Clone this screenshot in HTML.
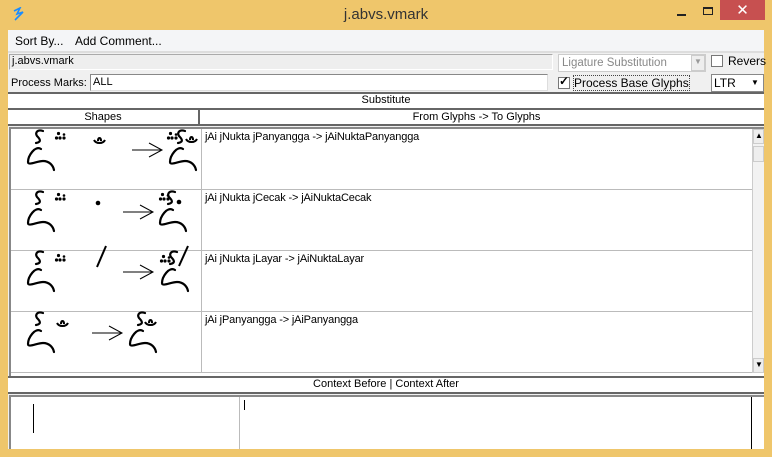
<!DOCTYPE html>
<html><head><style>
*{margin:0;padding:0;box-sizing:border-box}
body{width:772px;height:457px;background:#efc66b;font-family:"Liberation Sans",sans-serif;font-size:11px;position:relative;overflow:hidden;color:#000}
.a{position:absolute}
.t{white-space:nowrap}
.s{letter-spacing:-0.15px}
</style></head><body>
<svg class="a" style="left:12px;top:7px" width="14" height="16" viewBox="0 0 14 16"><path d="M2,4 L8,1 L5,7 L11,5 L3,13" fill="none" stroke="#1a8cff" stroke-width="1.6"/></svg>
<div class="a t" style="left:0;width:772px;top:6px;text-align:center;font-size:15px;color:#333">j.abvs.vmark</div>
<div class="a" style="left:677px;top:14px;width:9px;height:2px;background:#222"></div>
<div class="a" style="left:703px;top:7px;width:10px;height:8px;border:1px solid #222;border-top-width:2px"></div>
<div class="a" style="left:720px;top:0;width:45px;height:20px;background:#c75050"></div>
<div class="a t" style="left:720px;top:1px;width:45px;text-align:center;color:#fff;font-size:15px">✕</div>
<div class="a" style="left:8px;top:30px;width:756px;height:419px;background:#f0f0f0"></div>
<div class="a" style="left:8px;top:30px;width:756px;height:21px;background:#f4f5f7"></div>
<div class="a t" style="left:15px;top:34px;font-size:12px">Sort By...</div>
<div class="a t" style="left:75px;top:34px;font-size:12px">Add Comment...</div>
<div class="a" style="left:8px;top:51px;width:756px;height:2px;background:#ddd"></div>
<div class="a" style="left:9px;top:54px;width:544px;height:16px;background:#eee;border:1px solid #aaa;border-right-color:#fff;border-bottom-color:#fff"></div>
<div class="a t" style="left:12px;top:55px">j.abvs.vmark</div>
<div class="a t" style="left:11px;top:77px">Process Marks:</div>
<div class="a" style="left:90px;top:74px;width:458px;height:17px;background:#fff;border:1px solid #888;border-right-color:#ddd;border-bottom-color:#ddd"></div>
<div class="a t" style="left:93px;top:76px">ALL</div>
<div class="a" style="left:558px;top:54px;width:148px;height:18px;background:#fff;border:1px solid #ccc"></div>
<div class="a t" style="left:562px;top:57px;color:#888;font-size:11.5px">Ligature Substitution</div>
<div class="a" style="left:691px;top:55px;width:14px;height:16px;background:#eee;border:1px solid #ccc"></div>
<div class="a t" style="left:694px;top:57px;color:#999;font-size:8px">▼</div>
<div class="a" style="left:711px;top:55px;width:12px;height:12px;background:#fff;border:1px solid #777"></div>
<div class="a t" style="left:728px;top:54px;font-size:12px">Revers</div>
<div class="a" style="left:558px;top:77px;width:12px;height:12px;background:#fff;border:1px solid #777"></div>
<div class="a t" style="left:559px;top:74px;font-size:12px;font-weight:bold">✓</div>
<div class="a t" style="left:574px;top:76px;font-size:12px;outline:1px dotted #444">Process Base Glyphs</div>
<div class="a" style="left:711px;top:74px;width:53px;height:18px;background:#fff;border:1px solid #888"></div>
<div class="a t" style="left:714px;top:76px;font-size:12px">LTR</div>
<div class="a t" style="left:751px;top:78px;font-size:8px">▼</div>
<div class="a" style="left:8px;top:92px;width:756px;height:17px;background:#fff;border-top:2px solid #666;border-bottom:1px solid #666"></div>
<div class="a t" style="left:0;width:772px;top:94px;text-align:center">Substitute</div>
<div class="a" style="left:8px;top:109px;width:756px;height:17px;background:#fff;border-top:1px solid #666;border-bottom:2px solid #666"></div>
<div class="a" style="left:198px;top:109px;width:2px;height:17px;background:#666"></div>
<div class="a t" style="left:8px;width:190px;top:111px;text-align:center">Shapes</div>
<div class="a t" style="left:200px;width:553px;top:111px;text-align:center">From Glyphs -&gt; To Glyphs</div>
<div class="a" style="left:9px;top:127px;width:755px;height:249px;background:#fff;border-top:2px solid #888;border-left:2px solid #888"></div>
<div class="a" style="left:201px;top:129px;width:1px;height:244px;background:#bbb"></div>
<div class="a" style="left:11px;top:189px;width:742px;height:1px;background:#bbb"></div>
<div class="a" style="left:11px;top:250px;width:742px;height:1px;background:#bbb"></div>
<div class="a" style="left:11px;top:311px;width:742px;height:1px;background:#bbb"></div>
<div class="a" style="left:11px;top:372px;width:742px;height:1px;background:#bbb"></div>
<div class="a" style="left:752px;top:129px;width:12px;height:244px;background:#f2f2f2;border-left:1px solid #ccc"></div>
<div class="a" style="left:753px;top:129px;width:11px;height:15px;background:#eee;border:1px solid #ccc"></div>
<div class="a t" style="left:755px;top:131px;font-size:8px">▲</div>
<div class="a" style="left:753px;top:146px;width:11px;height:16px;background:#eee;border:1px solid #ccc"></div>
<div class="a" style="left:753px;top:358px;width:11px;height:15px;background:#eee;border:1px solid #ccc"></div>
<div class="a t" style="left:755px;top:360px;font-size:8px">▼</div>
<div class="a t s" style="left:205px;top:131px">jAi jNukta jPanyangga -&gt; jAiNuktaPanyangga</div>
<div class="a t s" style="left:205px;top:192px">jAi jNukta jCecak -&gt; jAiNuktaCecak</div>
<div class="a t s" style="left:205px;top:253px">jAi jNukta jLayar -&gt; jAiNuktaLayar</div>
<div class="a t s" style="left:205px;top:314px">jAi jPanyangga -&gt; jAiPanyangga</div>
<svg class="a" style="left:0;top:0" width="772" height="457" viewBox="0 0 772 457">
<defs>
<g id="ai" fill="none" stroke="#000" stroke-width="2.2" stroke-linecap="round">
<path d="M16,1 C10,-1 8,3 10,6 C13,9 15,12 9,13"/>
<path d="M14,19 C8,15 1,26 1,32 C1,36 10,31 16,31 C22,31 26,35 27,40"/>
</g>
<g id="nk" fill="#000"><circle cx="3.5" cy="1.5" r="1.6"/><circle cx="1.5" cy="6" r="1.6"/><circle cx="5" cy="6" r="1.6"/><circle cx="9" cy="6" r="1.6"/><circle cx="9" cy="2.5" r="1.3"/></g>
<g id="pn" fill="none" stroke="#000" stroke-width="2"><path d="M0,3 C2,7 9,7 11,3 M4,4 C4,0 7,0 7,4"/></g>
<g id="ar" fill="none" stroke="#000" stroke-width="1"><path d="M0,0 H30 M17,-7 L30,0 L17,7"/></g>
</defs>
<use href="#ai" x="27" y="130"/><use href="#nk" x="55" y="132"/><use href="#pn" x="94" y="137"/><use href="#ar" x="132" y="150"/>
<use href="#ai" x="169" y="130"/><use href="#nk" x="167" y="132"/><use href="#pn" x="186" y="136"/>
<use href="#ai" x="27" y="191"/><use href="#nk" x="55" y="193"/><circle cx="98" cy="203" r="2.3"/><use href="#ar" x="123" y="212"/>
<use href="#ai" x="159" y="191"/><use href="#nk" x="159" y="193"/><circle cx="179" cy="202" r="2.3"/>
<use href="#ai" x="27" y="251"/><use href="#nk" x="55" y="254"/><path d="M106,246 L97,267" stroke="#000" stroke-width="2"/><use href="#ar" x="123" y="272"/>
<use href="#ai" x="161" y="251"/><use href="#nk" x="160" y="255"/><path d="M188,246 L179,266" stroke="#000" stroke-width="2"/>
<use href="#ai" x="27" y="312"/><use href="#pn" x="57" y="320"/><use href="#ar" x="92" y="333"/>
<use href="#ai" x="129" y="312"/><use href="#pn" x="145" y="319"/>
</svg>
<div class="a" style="left:8px;top:376px;width:756px;height:18px;background:#fff;border-top:2px solid #666;border-bottom:2px solid #666"></div>
<div class="a t" style="left:0;width:772px;top:378px;text-align:center">Context Before | Context After</div>
<div class="a" style="left:9px;top:395px;width:755px;height:54px;background:#fff;border-top:2px solid #888;border-left:2px solid #888"></div>
<div class="a" style="left:239px;top:397px;width:1px;height:52px;background:#bbb"></div>
<div class="a" style="left:33px;top:404px;width:1px;height:29px;background:#000"></div>
<div class="a" style="left:244px;top:400px;width:1px;height:10px;background:#000"></div>
<div class="a" style="left:751px;top:397px;width:1px;height:52px;background:#000"></div>
</body></html>
